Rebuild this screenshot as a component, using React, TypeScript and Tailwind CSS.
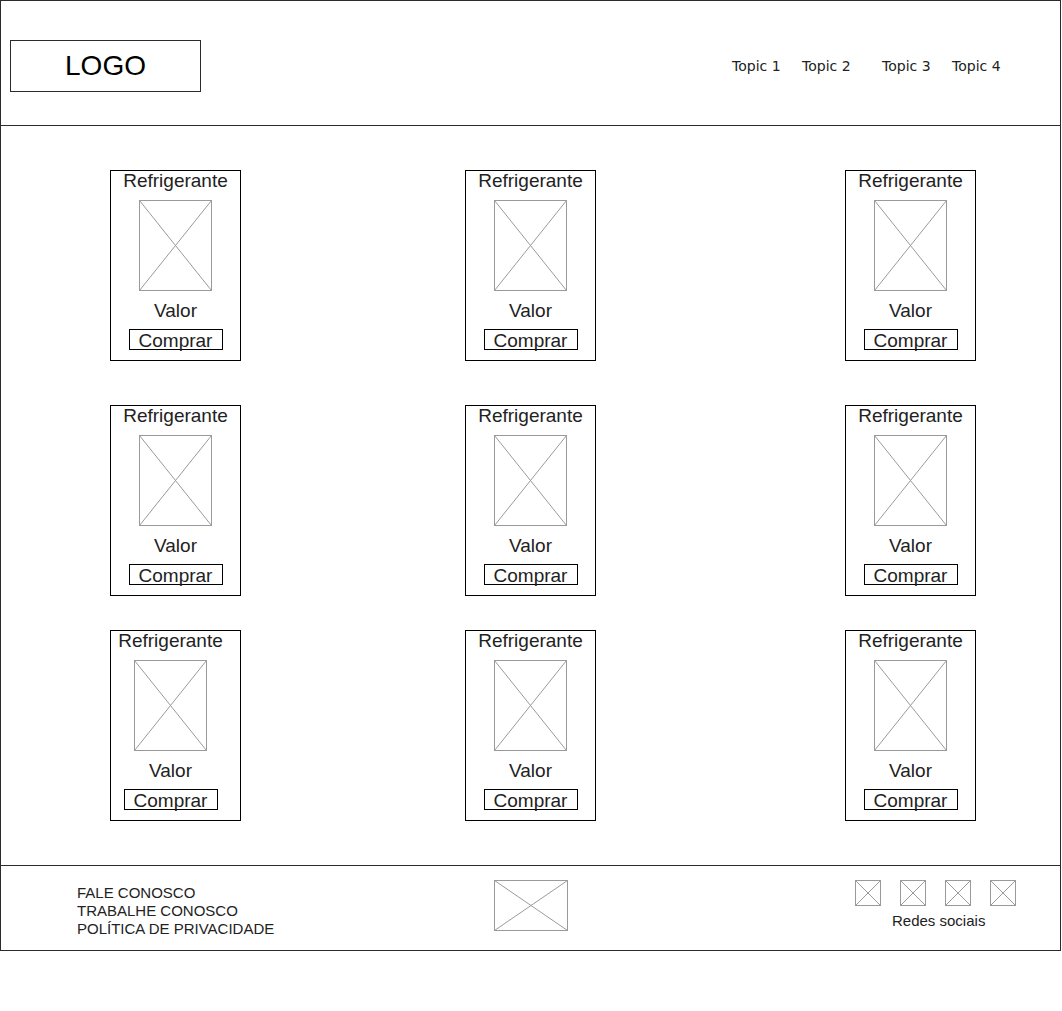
import React from 'react';

function Placeholder({ w, h }: { w: number; h: number }) {
  return (
    <svg width={w} height={h} viewBox={`0 0 ${w} ${h}`} className="block shrink-0">
      <rect x="0.5" y="0.5" width={w - 1} height={h - 1} fill="none" stroke="#9a9a9a" />
      <line x1="0.5" y1="0.5" x2={w - 0.5} y2={h - 0.5} stroke="#9a9a9a" />
      <line x1={w - 0.5} y1="0.5" x2="0.5" y2={h - 0.5} stroke="#9a9a9a" />
    </svg>
  );
}

function ProductCard({ shifted = false }: { shifted?: boolean }) {
  return (
    <div className="w-[131px] h-[191px] border border-black bg-white">
      <div className={`flex flex-col items-center ${shifted ? 'pr-[10px]' : ''}`}>
        <div className="text-[19px] leading-[20px] text-[#222]">Refrigerante</div>
        <div className="mt-[9px]">
          <Placeholder w={73} h={91} />
        </div>
        <div className="mt-[10px] text-[19px] leading-[20px] text-[#222]">Valor</div>
        <div className="mt-[8px] w-[94px] h-[21px] border border-black flex items-center justify-center text-[19px] leading-[19px] pt-[2px] text-[#222]">
          Comprar
        </div>
      </div>
    </div>
  );
}

function CardRow({ shiftFirst = false }: { shiftFirst?: boolean }) {
  return (
    <div className="flex">
      <div className="ml-[109px]">
        <ProductCard shifted={shiftFirst} />
      </div>
      <div className="ml-[224px]">
        <ProductCard />
      </div>
      <div className="ml-[249px]">
        <ProductCard />
      </div>
    </div>
  );
}

export default function App() {
  return (
    <div className="w-[1062px] h-[1011px] bg-white font-['Liberation_Sans',Arial,sans-serif]">
      <div className="w-[1061px] h-[951px] border border-[#2b2b2b] flex flex-col">
        {/* Header */}
        <header className="h-[125px] border-b border-[#2b2b2b] flex items-start shrink-0">
          <div className="ml-[9px] mt-[39px] w-[191px] h-[52px] border border-[#2b2b2b] flex items-center justify-center text-[28px] leading-[32px] text-black">
            LOGO
          </div>
          <nav className="ml-[531px] mt-[57px] flex font-['DejaVu_Sans',Verdana,sans-serif] text-[14px] leading-[17px] text-[#222]">
            <span className="w-[70px]">Topic 1</span>
            <span className="w-[80px]">Topic 2</span>
            <span className="w-[70px]">Topic 3</span>
            <span>Topic 4</span>
          </nav>
        </header>

        {/* Products */}
        <main className="flex-1 flex flex-col pt-[44px]">
          <CardRow />
          <div className="mt-[44px]">
            <CardRow />
          </div>
          <div className="mt-[34px]">
            <CardRow shiftFirst />
          </div>
        </main>

        {/* Footer */}
        <footer className="h-[85px] border-t border-[#2b2b2b] flex items-start shrink-0 text-[15px] text-[#222]">
          <div className="ml-[76px] mt-[18px] w-[417px] leading-[18px]">
            <div>FALE CONOSCO</div>
            <div>TRABALHE CONOSCO</div>
            <div>POLÍTICA DE PRIVACIDADE</div>
          </div>
          <div className="mt-[14px]">
            <Placeholder w={74} h={51} />
          </div>
          <div className="ml-[287px] mt-[14px] flex flex-col">
            <div className="flex gap-[19px]">
              <Placeholder w={26} h={26} />
              <Placeholder w={26} h={26} />
              <Placeholder w={26} h={26} />
              <Placeholder w={26} h={26} />
            </div>
            <div className="mt-[6px] ml-[37px] leading-[18px]">Redes sociais</div>
          </div>
        </footer>
      </div>
    </div>
  );
}
